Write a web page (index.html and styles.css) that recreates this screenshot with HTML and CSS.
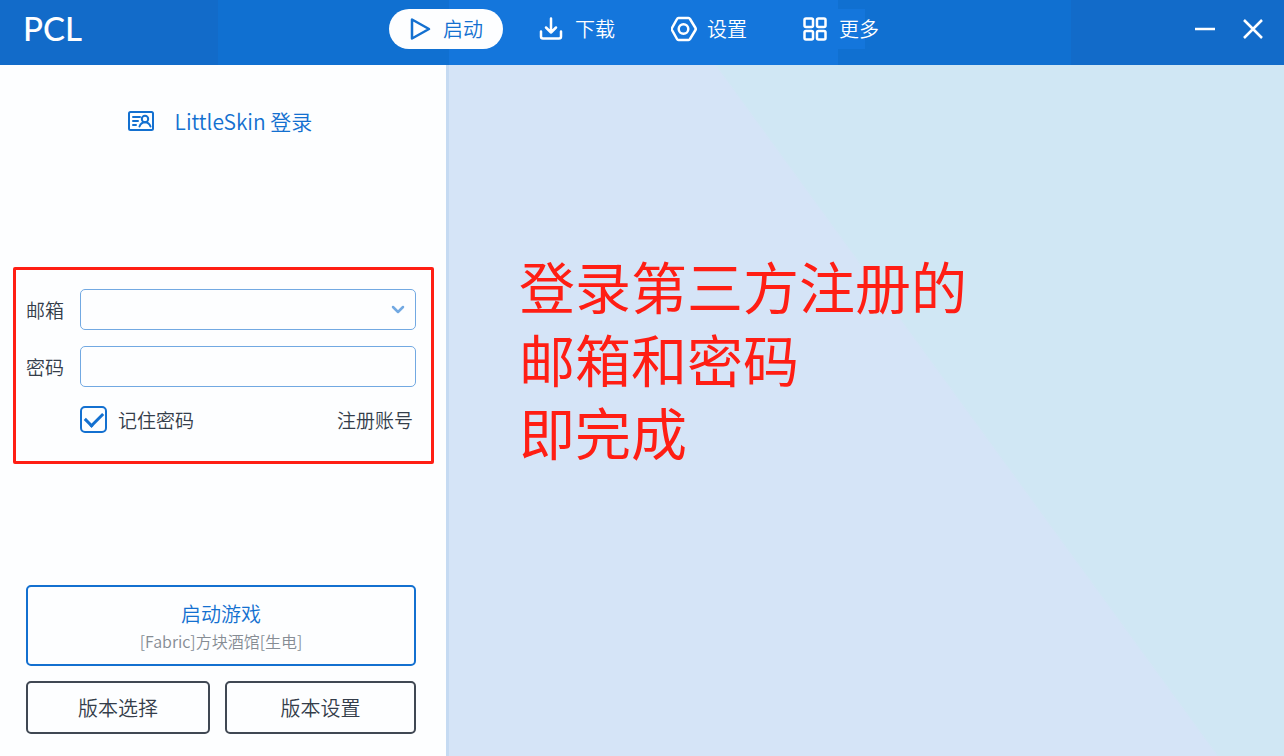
FILE: index.html
```html
<!DOCTYPE html>
<html lang="zh-CN">
<head>
<meta charset="utf-8">
<title>PCL</title>
<link rel="stylesheet" href="styles.css">
</head>
<body>
<div class="app">
  <header class="titlebar">
    <div class="brand">PCL</div>
    <nav class="tabs">
      <button class="tab tab-active" type="button">
        <svg class="icon" viewBox="0 0 26 26"><path d="M5 3.500v19L22 13z"/></svg>启动
      </button>
      <button class="tab" type="button">
        <svg class="icon" viewBox="0 0 26 26"><path d="M12 2.500v14M7 11.500l5 5 5-5M2 15.500v5q0 2 2 2h16q2 0 2-2v-5"/></svg>下载
      </button>
      <button class="tab" type="button">
        <svg class="icon" viewBox="0 0 26 26"><path d="M7.500 2h10q1 0 1.500 1l5.500 9q.5 1 0 2l-5.500 9q-.5 1-1.500 1h-10q-1 0-1.500-1l-5-9q-.5-1 0-2l5-9q.5-1 1.500-1z"/><circle cx="12.500" cy="13" r="4.800"/></svg>设置
      </button>
      <button class="tab tab-more" type="button">
        <svg class="icon" viewBox="0 0 26 26"><rect x="1.500" y="2.500" width="8.500" height="8.500" rx="1.500"/><rect x="14" y="2.500" width="8.500" height="8.500" rx="1.500"/><rect x="1.500" y="15" width="8.500" height="8.500" rx="1.500"/><rect x="14" y="15" width="8.500" height="8.500" rx="1.500"/></svg>更多
      </button>
    </nav>
    <div class="window-buttons">
      <button class="window-button" type="button" aria-label="最小化"><svg class="icon" viewBox="0 0 26 26"><path d="M3 13h20"/></svg></button>
      <button class="window-button" type="button" aria-label="关闭"><svg class="icon" viewBox="0 0 26 26"><path d="M4 4l18 18M22 4L4 22"/></svg></button>
    </div>
  </header>
  <main class="content">
    <section class="sidebar">
      <h1 class="login-title">
        <svg class="card-icon" viewBox="0 0 28 22"><rect x="2" y="2" width="24" height="18" rx="1.500"/><path d="M6 7h7M6 11h5M6 15h3"/><circle cx="18" cy="9" r="3.200"/><path d="M12.500 16.500q1.500-4.300 5.500-4.300t5.500 4.300"/></svg>
        LittleSkin 登录
      </h1>
      <form class="login-form">
        <label for="email">邮箱</label>
        <div class="combo">
          <input class="field" id="email" type="text">
          <svg class="chevron" viewBox="0 0 14 10"><path d="M2 2l5 5 5-5"/></svg>
        </div>
        <label for="password">密码</label>
        <input class="field" id="password" type="password">
        <div class="form-footer">
          <label class="remember"><input class="check" type="checkbox" checked>记住密码</label>
          <a class="register" href="#">注册账号</a>
        </div>
      </form>
      <div class="actions">
        <button class="launch" type="button"><span class="launch-title">启动游戏</span><span class="launch-version">[Fabric]方块酒馆[生电]</span></button>
        <button class="action" type="button">版本选择</button>
        <button class="action" type="button">版本设置</button>
      </div>
    </section>
    <section class="stage">
      <p class="note">登录第三方注册的<br>邮箱和密码<br>即完成</p>
    </section>
  </main>
</div>
</body>
</html>
```
FILE: styles.css
```css
* {
  box-sizing: border-box;
}

body {
  margin: 0;
  font-family: "Noto Sans CJK SC", sans-serif;
  font-weight: 350;
  color: #343d4a;
}

button,
input {
  font: inherit;
  color: inherit;
}

button {
  padding: 0;
  border: 0;
  background: none;
}

svg {
  fill: none;
  stroke: currentColor;
  stroke-width: 2.5;
  stroke-linecap: round;
  stroke-linejoin: round;
}

.app {
  min-height: 100vh;
  display: flex;
  flex-direction: column;
}

.titlebar {
  display: grid;
  grid-template-columns: 1fr auto 1fr;
  align-items: center;
  padding: 9px 18px 16px 22px;
  color: #fff;
  background: linear-gradient(90deg, #126bc9 17%, #1070d1 17% 35%, #1476dc 35% 65.3%, #1070d1 65.3% 83.4%, #126bc9 83.4%);
}

.brand {
  font-family: Lato, sans-serif;
  font-weight: 500;
  font-size: 33px;
  line-height: 38px;
  padding: 0 0 2px 1px;
}

.tabs {
  display: flex;
  gap: 18px;
}

.tab {
  display: flex;
  align-items: center;
  justify-content: center;
  gap: 10px;
  width: 114px;
  height: 40px;
  padding-right: 2px;
  border-radius: 20px;
  font-size: 20px;
  line-height: 28px;
}

.tab-active {
  background: #fdfeff;
  color: #1370d0;
}

.tab-more {
  background: linear-gradient(90deg, #1476dc 80px, transparent 80px);
}

.icon {
  width: 26px;
  height: 26px;
}

.window-buttons {
  display: flex;
  justify-content: flex-end;
  gap: 22px;
}

.window-button {
  height: 26px;
}

.window-button .icon {
  stroke-linecap: butt;
}

.content {
  flex: 1;
  display: grid;
  grid-template-columns: 446px 1fr;
}

.sidebar {
  display: flex;
  flex-direction: column;
  padding: 40px 12px 22px 13px;
  background: #fdfeff;
}

.login-title {
  display: flex;
  align-items: center;
  justify-content: center;
  gap: 20px;
  margin: 0;
  padding-right: 8px;
  font-size: 21px;
  line-height: 32px;
  font-weight: 350;
  color: #1370d0;
}

.card-icon {
  width: 28px;
  height: 22px;
  stroke-width: 2;
}

.login-form {
  display: grid;
  grid-template-columns: auto 1fr;
  align-items: center;
  gap: 16px;
  margin: 130px 0 auto;
  padding: 19px 15px 28px 10px;
  border: 3px solid #ff1e14;
  border-radius: 2px;
  font-size: 19px;
}

.combo {
  position: relative;
}

.field {
  display: block;
  width: 100%;
  height: 41px;
  padding: 0 12px;
  border: 1px solid #72a9e2;
  border-radius: 5px;
  background: transparent;
}

.chevron {
  position: absolute;
  top: 16px;
  right: 11px;
  width: 14px;
  height: 10px;
  color: #72a9e2;
}

.form-footer {
  grid-column: 2;
  display: flex;
  align-items: center;
  justify-content: space-between;
  padding: 3px 3px 0 0;
}

.remember {
  display: flex;
  align-items: center;
  gap: 11px;
}

.check {
  appearance: none;
  display: grid;
  place-items: center;
  width: 27px;
  height: 27px;
  margin: 0;
  border: 2px solid #1370d0;
  border-radius: 5px;
}

.check::after {
  content: "";
  width: 15px;
  height: 8px;
  margin-bottom: 5px;
  border: solid #1370d0;
  border-width: 0 0 3px 3px;
  transform: rotate(-45deg);
}

.register {
  color: inherit;
  text-decoration: none;
}

.actions {
  display: grid;
  grid-template-columns: 184px 1fr;
  gap: 15px;
  padding: 0 18px 0 13px;
  font-size: 20px;
}

.launch {
  grid-column: span 2;
  display: flex;
  flex-direction: column;
  align-items: center;
  justify-content: center;
  height: 81px;
  padding-top: 3px;
  border: 2px solid #1370d0;
  border-radius: 5px;
  color: #1370d0;
}

.launch-title {
  line-height: 28px;
}

.launch-version {
  font-size: 16px;
  line-height: 26px;
  color: #868c94;
}

.action {
  height: 53px;
  border: 2px solid #404853;
  border-radius: 5px;
}

.stage {
  padding: 183px 70px 0;
  border-left: 3px solid #c5daf2;
  background: linear-gradient(54deg, #d5e4f7 57.4%, #d0e7f4 57.6%);
}

.note {
  margin: 0;
  font-size: 56px;
  line-height: 73px;
  font-weight: 400;
  color: #ff1e14;
}
```
